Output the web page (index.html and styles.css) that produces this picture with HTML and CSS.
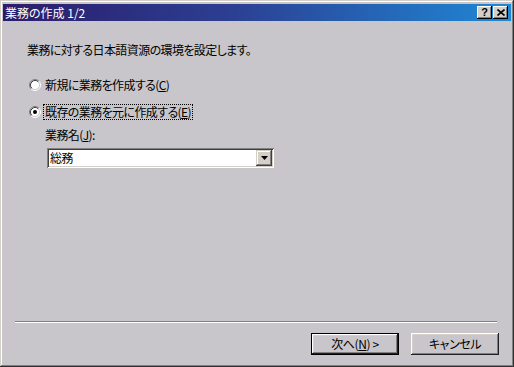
FILE: index.html
```html
<!DOCTYPE html>
<html lang="ja">
<head>
<meta charset="utf-8">
<title>業務の作成 1/2</title>
<link rel="stylesheet" href="styles.css">
</head>
<body>
<div class="window">
  <div class="titlebar">
    <span class="title">業務の作成 1/2</span>
    <div class="caption-buttons">
      <span class="cbtn help">?</span>
      <span class="cbtn close">
        <svg width="8" height="7" viewBox="0 0 8 7"><path d="M0.5 0.5 L7.5 6.5 M7.5 0.5 L0.5 6.5" stroke="#000" stroke-width="1.6" fill="none"/></svg>
      </span>
    </div>
  </div>
  <div class="client">
    <p class="intro">業務に対する日本語資源の環境を設定します。</p>
    <div class="options">
      <div class="radio-row">
        <span class="radio">
          <svg width="12" height="12" viewBox="0 0 12 12">
            <circle cx="6" cy="6" r="4.5" fill="#fff"/>
            <path d="M2.11 9.89 A5.5 5.5 0 0 1 9.89 2.11" stroke="#808080" fill="none"/>
            <path d="M9.89 2.11 A5.5 5.5 0 0 1 2.11 9.89" stroke="#ffffff" fill="none"/>
            <path d="M2.82 9.18 A4.5 4.5 0 0 1 9.18 2.82" stroke="#404040" fill="none"/>
            <path d="M9.18 2.82 A4.5 4.5 0 0 1 2.82 9.18" stroke="#d4d0c8" fill="none"/>
          </svg>
        </span>
        <span class="label">新規に業務を作成する(<u>C</u>)</span>
      </div>
      <div class="radio-row second">
        <span class="radio">
          <svg width="12" height="12" viewBox="0 0 12 12">
            <circle cx="6" cy="6" r="4.5" fill="#fff"/>
            <path d="M2.11 9.89 A5.5 5.5 0 0 1 9.89 2.11" stroke="#808080" fill="none"/>
            <path d="M9.89 2.11 A5.5 5.5 0 0 1 2.11 9.89" stroke="#ffffff" fill="none"/>
            <path d="M2.82 9.18 A4.5 4.5 0 0 1 9.18 2.82" stroke="#404040" fill="none"/>
            <path d="M9.18 2.82 A4.5 4.5 0 0 1 2.82 9.18" stroke="#d4d0c8" fill="none"/>
            <circle cx="6" cy="6" r="2" fill="#000"/>
          </svg>
        </span>
        <span class="label focus">既存の業務を元に作成する(<u>E</u>)</span>
      </div>
      <div class="field-label">業務名(<u>J</u>):</div>
      <div class="combo">
        <span class="combo-text">総務</span>
        <span class="combo-btn">
          <svg width="7" height="4" viewBox="0 0 7 4"><path d="M0 0 H7 L3.5 4 Z" fill="#000"/></svg>
        </span>
      </div>
    </div>
    <div class="separator"></div>
    <div class="buttons">
      <button class="btn default">次へ(<u>N</u>) &gt;</button>
      <button class="btn">キャンセル</button>
    </div>
  </div>
</div>
</body>
</html>
```
FILE: styles.css
```css
html, body {
  margin: 0;
  padding: 0;
  background: #c8c6cb;
}

body {
  width: 514px;
  height: 367px;
  overflow: hidden;
  font-family: "Noto Sans CJK JP", "Liberation Sans", sans-serif;
  font-size: 12px;
  font-feature-settings: "palt";
  letter-spacing: -0.6px;
  color: #000;
}

.window {
  box-sizing: border-box;
  width: 514px;
  height: 367px;
  padding: 4px 3px 3px 3px;
  background: #c8c6cb;
  display: flex;
  flex-direction: column;
  box-shadow:
    inset -1px -1px 0 #303030,
    inset 1px 1px 0 #d4d0c8,
    inset -2px -2px 0 #808080,
    inset 2px 2px 0 #ffffff;
}

.titlebar {
  height: 17px;
  flex: 0 0 17px;
  background: linear-gradient(to right, #2b1c6a 0%, #2c3f92 45%, #1f88d6 100%);
  display: flex;
  align-items: center;
  justify-content: space-between;
  padding-left: 2px;
}

.title {
  color: #fff;
  font-size: 12px;
  line-height: 14px;
  letter-spacing: 0;
}

.caption-buttons {
  display: flex;
  gap: 1px;
  margin-right: 3px;
}

.cbtn {
  box-sizing: border-box;
  width: 15px;
  height: 13px;
  background: #d4d0c8;
  display: flex;
  align-items: center;
  justify-content: center;
  box-shadow:
    inset -1px -1px 0 #000,
    inset 1px 1px 0 #fff,
    inset -2px -2px 0 #808080;
}

.help {
  font-family: "Liberation Sans", sans-serif;
  font-weight: bold;
  font-size: 11px;
  line-height: 11px;
  letter-spacing: 0;
  font-feature-settings: normal;
}

.client {
  flex: 1;
  display: flex;
  flex-direction: column;
}

.intro {
  margin: 22px 0 0 24px;
  line-height: 14px;
}

.options {
  margin: 20px 0 0 26px;
  display: flex;
  flex-direction: column;
  align-items: flex-start;
}

.radio-row {
  height: 16px;
  display: flex;
  align-items: center;
  gap: 2px;
}

.radio-row.second {
  margin-top: 11px;
}

.radio {
  width: 12px;
  height: 12px;
  display: block;
}

.radio svg {
  display: block;
}

.label {
  line-height: 14px;
  padding: 0 1px;
  border: 1px dotted transparent;
}

.label.focus {
  border-color: #000;
}

.field-label {
  margin: 8px 0 0 16px;
  line-height: 14px;
}

.combo {
  box-sizing: border-box;
  margin: 6px 0 0 18px;
  width: 227px;
  height: 20px;
  background: #fff;
  display: flex;
  align-items: center;
  justify-content: space-between;
  padding: 2px;
  box-shadow:
    inset 1px 1px 0 #808080,
    inset -1px -1px 0 #fff,
    inset 2px 2px 0 #404040,
    inset -2px -2px 0 #d4d0c8;
}

.combo-text {
  padding-left: 1px;
  line-height: 14px;
}

.combo-btn {
  box-sizing: border-box;
  width: 16px;
  height: 16px;
  background: #d4d0c8;
  display: flex;
  align-items: center;
  justify-content: center;
  box-shadow:
    inset -1px -1px 0 #404040,
    inset 1px 1px 0 #d4d0c8,
    inset -2px -2px 0 #808080,
    inset 2px 2px 0 #fff;
}

.combo-btn svg {
  display: block;
}

.separator {
  margin: auto 14px 0 12px;
  border-top: 1px solid #808080;
  border-bottom: 1px solid #fff;
  height: 0;
}

.buttons {
  display: flex;
  justify-content: flex-end;
  gap: 12px;
  margin-top: 10px;
  padding: 0 12px 9px 0;
}

.btn {
  box-sizing: border-box;
  width: 88px;
  height: 22px;
  margin: 0;
  padding: 0;
  border: none;
  background: #c8c6cb;
  font-family: "Noto Sans CJK JP", "Liberation Sans", sans-serif;
  font-size: 12px;
  font-feature-settings: "palt";
  letter-spacing: -0.4px;
  color: #000;
  line-height: 14px;
  box-shadow:
    inset -1px -1px 0 #202020,
    inset 1px 1px 0 #fff,
    inset -2px -2px 0 #808080,
    inset 2px 2px 0 #d4d0c8;
}

.btn.default {
  box-shadow:
    inset 0 0 0 1px #000,
    inset -2px -2px 0 #202020,
    inset 2px 2px 0 #fff,
    inset -3px -3px 0 #808080,
    inset 3px 3px 0 #d4d0c8;
}
```
